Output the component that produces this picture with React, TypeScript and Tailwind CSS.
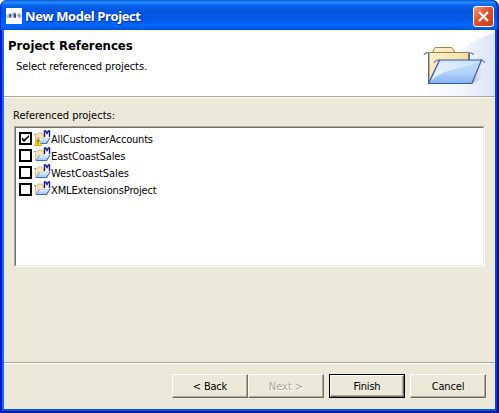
import React from 'react';

const projects = [
  { name: 'AllCustomerAccounts', checked: true, spacing: 'tracking-[-0.19px]' },
  { name: 'EastCoastSales', checked: false, spacing: 'tracking-[-0.1px]' },
  { name: 'WestCoastSales', checked: false, spacing: 'tracking-[-0.06px]' },
  { name: 'XMLExtensionsProject', checked: false, spacing: 'tracking-[-0.14px]' },
];

function AppIcon() {
  return (
    <svg width="16" height="16" viewBox="0 0 16 16" className="shrink-0">
      <rect width="16" height="16" fill="#fdfdfe" />
      <path d="M0 8 2 6l3-1v5H1z" fill="#b9bcc9" />
      <ellipse cx="4.4" cy="7.7" rx="1.2" ry="2" fill="#3c4d78" />
      <path d="M6 6 8 4l2 1v4l-3 1z" fill="#a9aebb" />
      <ellipse cx="9" cy="7.7" rx="1.2" ry="2.2" fill="#344779" />
      <path d="m11 6 2-1 3 3-1 2-3-1z" fill="#c3c6d1" />
      <path d="M12.5 6h1.2v3.5h-1.2z" fill="#6a7694" />
    </svg>
  );
}

function FolderArt() {
  return (
    <svg width="115" height="66" viewBox="0 0 115 66" className="shrink-0">
      <defs>
        <linearGradient id="sweep" x1="0" y1="0" x2="1" y2="0">
          <stop offset="0" stopColor="#fff" />
          <stop offset=".6" stopColor="#f0f4fc" />
          <stop offset="1" stopColor="#dbe4f7" />
        </linearGradient>
        <linearGradient id="tan" x1="0" y1="0" x2="1" y2="1">
          <stop offset="0" stopColor="#fff6d6" />
          <stop offset="1" stopColor="#ecd08b" />
        </linearGradient>
        <linearGradient id="blue" x1="0" y1="0" x2="0" y2="1">
          <stop offset="0" stopColor="#b9d8fb" />
          <stop offset=".5" stopColor="#b5d6fb" />
          <stop offset="1" stopColor="#85b3f2" />
        </linearGradient>
        <linearGradient id="gloss" x1="0" y1="1" x2="1" y2="0">
          <stop offset="0" stopColor="#fff" stopOpacity=".85" />
          <stop offset="1" stopColor="#d6e9ff" stopOpacity=".6" />
        </linearGradient>
        <linearGradient id="shade" x1="0" y1="0" x2="1" y2="0">
          <stop offset="0" stopColor="#aeb7cb" />
          <stop offset="1" stopColor="#dfe6f7" stopOpacity="0" />
        </linearGradient>
      </defs>
      <path d="M40 66C62 54 60 22 115 2v64z" fill="url(#sweep)" />
      <path d="m92 53 9-16c6 2 4 11-4 15z" fill="url(#shade)" />
      <path d="M49 53V22.5h3.5l2-4q.5-1 1.500-1h15q1 0 1.500 1l2.500 4H89V53z" fill="url(#tan)" stroke="#a1803b" />
      <path d="M48.500 23v30" stroke="#5263a0" />
      <path d="M49 22.500h26" stroke="#a1803b" />
      <path d="M89 22v9" stroke="#62604f" strokeWidth="1.500" />
      <path d="M44 25q1-2.500 5-2.500M88 22.500q5 0 5.500 2.500M54 33q1-3 6-3M100 30q4 0 4.500 3" fill="none" stroke="#8493a6" strokeWidth="1.500" />
      <path d="m48.500 53.500 11-23.500h42l-9.500 23.500z" fill="url(#blue)" stroke="#3f58a3" strokeWidth="1.200" />
      <path d="m51 51 9.500-20H100c-15 9-36 6-49 20z" fill="url(#gloss)" />
    </svg>
  );
}

function ProjectIcon({ warning }: { warning: boolean }) {
  return (
    <svg width="17" height="17" viewBox="0 0 17 17" className="ml-[2px] shrink-0">
      <path d="M1.5 13V4.500H3l1-1.500h4l1 1.500h1V11z" fill="#f9e3b7" stroke="#d3b481" strokeWidth=".8" />
      <path d="M0 4.500h2" stroke="#8ba3c2" />
      <path d="m2 14 3.500-6H16l-3.500 6z" fill="#acd2fb" />
      <path d="m2 13.500 3.500-5.500" stroke="#7c9dcb" />
      <path d="M2 13.500h10.500L16 8" fill="none" stroke="#3f69b2" strokeWidth="1.100" />
      <path d="M6 8.500h9l-1 2H5z" fill="#d5eaff" />
      <path d="M10.500 7V1h1.200l1.300 2.500L14.300 1h1.200v6" fill="none" stroke="#17178b" strokeWidth="1.400" />
      {warning && (
        <g>
          <path d="M4 7.500.5 15.500h7z" fill="#ffe33f" stroke="#d5a916" strokeWidth="1" strokeLinejoin="round" />
          <path d="M4 10v2.500M4 13.300v1.300" stroke="#463c09" strokeWidth="1.100" />
        </g>
      )}
    </svg>
  );
}

function CheckBox({ checked }: { checked: boolean }) {
  return (
    <span className="flex size-[13px] shrink-0 items-center justify-center border-2 border-black bg-white">
      {checked && (
        <svg width="9" height="9" viewBox="0 0 9 9" className="shrink-0">
          <path d="M1 3v3l2 2 5-5V1L3 5.500z" fill="#000" />
        </svg>
      )}
    </span>
  );
}

const raised = 'border border-t-white border-l-white border-r-[#716f64] border-b-[#716f64] pt-[1px] shadow-[inset_-1px_-1px_0_#aca899]';

export default function App() {
  return (
    <div className="flex h-[413px] w-[499px] flex-col overflow-hidden bg-white font-['DejaVu_Sans_Condensed','DejaVu_Sans',sans-serif] text-[11px] leading-[14px] text-black">
      <header className="flex h-[30px] shrink-0 items-center rounded-t-[7px] bg-[linear-gradient(180deg,#0058dc_0%,#288cff_7%,#0864ef_18%,#0055dc_35%,#0059e8_65%,#0266ff_85%,#0053d7_100%)] pt-[2px] pr-[5px] pl-[6px] shadow-[inset_1px_0_#0831d9,inset_-2px_0_#0030b8]">
        <AppIcon />
        <h1 className="ml-[3px] font-['Open_Sans',sans-serif] text-[13px] leading-[18px] font-bold tracking-[-0.4px] whitespace-nowrap text-white [text-shadow:1px_1px_#0b2f91]">New Model Project</h1>
        <button aria-label="Close" className="ml-auto flex size-[21px] items-center justify-center rounded-[3px] border border-white bg-[linear-gradient(135deg,#ef9b82,#df5030_45%,#c83e17)]">
          <svg width="13" height="13" viewBox="0 0 13 13"><path d="m2 2 9 9m0-9-9 9" stroke="#fff" strokeWidth="2.200" /></svg>
        </button>
      </header>
      <div className="flex min-h-0 flex-1 border-2 border-t-0 border-r-[#00138c] border-b-[#001ea0] border-l-[#0019cf]">
      <main className="flex min-h-0 flex-1 flex-col border-2 border-t-0 border-r-[#0441d8] border-b-[#0855dd] border-l-[#166aee] bg-[#ece9d8]">
        <section className="flex h-[66px] shrink-0 justify-between bg-white">
          <div className="pt-[8px] pl-[4px] whitespace-nowrap">
            <h2 className="text-[13px] leading-[16px] font-bold">Project References</h2>
            <p className="mt-[6px] ml-[8px] tracking-[-0.07px]">Select referenced projects.</p>
          </div>
          <FolderArt />
        </section>
        <div className="h-[2px] shrink-0 border-t border-b border-t-[#aca899] border-b-white" />
        <section className="flex min-h-0 flex-1 flex-col px-[10px] pt-[10px]">
          <label className="ml-[-1px] h-[18px] pt-[1px] whitespace-nowrap">Referenced projects:</label>
          <div className="h-[141px] w-[471px] border border-t-[#aca899] border-r-white border-b-white border-l-[#aca899] bg-white">
            <div className="h-full border border-t-[#716f64] border-r-[#f1efe2] border-b-[#f1efe2] border-l-[#716f64] pt-[2px] pl-[3px]">
              {projects.map((project) => (
                <div key={project.name} className="flex h-[17px] items-center whitespace-nowrap">
                  <CheckBox checked={project.checked} />
                  <ProjectIcon warning={project.checked} />
                  <span className={`pt-[2px] ${project.spacing}`}>{project.name}</span>
                </div>
              ))}
            </div>
          </div>
        </section>
        <footer className="flex h-[47px] shrink-0 items-start justify-end border-t border-[#aca899] pt-[11px] pr-[9px] shadow-[inset_0_1px_#fff]">
          <button className={`h-[24px] w-[76px] tracking-[-0.2px] ${raised}`}>&lt; Back</button>
          <button className={`h-[24px] w-[76px] text-[#aca899] [text-shadow:1px_1px_#fff] ${raised}`}>Next &gt;</button>
          <div className="ml-[5px] h-[24px] w-[76px] border border-black">
            <button className={`h-full w-full tracking-[-0.2px] ${raised}`}>Finish</button>
          </div>
          <button className={`ml-[5px] h-[24px] w-[76px] tracking-[-0.15px] ${raised}`}>Cancel</button>
        </footer>
      </main>
      </div>
    </div>
  );
}
